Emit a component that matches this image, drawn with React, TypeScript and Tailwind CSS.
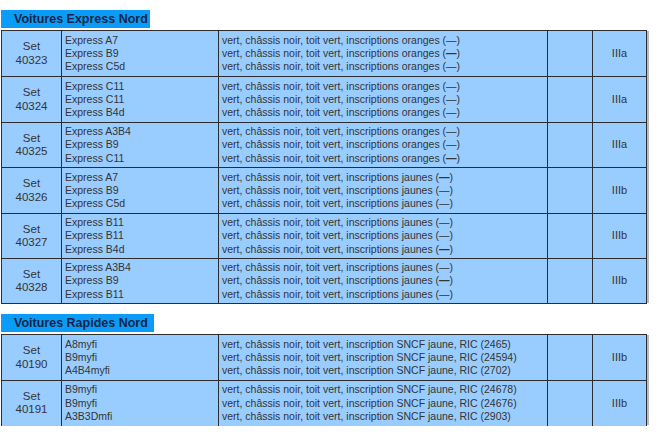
type Row = {
  set: string;
  models: string[];
  livery: { text: string; bold?: boolean }[];
  epoch: string;
  height: string;
};

const express: Row[] = [
  {
    set: "40323",
    models: ["Express A7", "Express B9", "Express C5d"],
    livery: [
      { text: "vert, châssis noir, toit vert, inscriptions oranges (—)" },
      { text: "vert, châssis noir, toit vert, inscriptions oranges (—)", bold: true },
      { text: "vert, châssis noir, toit vert, inscriptions oranges (—)" },
    ],
    epoch: "IIIa",
    height: "h-[46px]",
  },
  {
    set: "40324",
    models: ["Express C11", "Express C11", "Express B4d"],
    livery: [
      { text: "vert, châssis noir, toit vert, inscriptions oranges (—)" },
      { text: "vert, châssis noir, toit vert, inscriptions oranges (—)" },
      { text: "vert, châssis noir, toit vert, inscriptions oranges (—)" },
    ],
    epoch: "IIIa",
    height: "h-[46px]",
  },
  {
    set: "40325",
    models: ["Express A3B4", "Express B9", "Express C11"],
    livery: [
      { text: "vert, châssis noir, toit vert, inscriptions oranges (—)" },
      { text: "vert, châssis noir, toit vert, inscriptions oranges (—)" },
      { text: "vert, châssis noir, toit vert, inscriptions oranges (—)", bold: true },
    ],
    epoch: "IIIa",
    height: "h-[45px]",
  },
  {
    set: "40326",
    models: ["Express A7", "Express B9", "Express C5d"],
    livery: [
      { text: "vert, châssis noir, toit vert, inscriptions jaunes (—)", bold: true },
      { text: "vert, châssis noir, toit vert, inscriptions jaunes (—)" },
      { text: "vert, châssis noir, toit vert, inscriptions jaunes (—)" },
    ],
    epoch: "IIIb",
    height: "h-[46px]",
  },
  {
    set: "40327",
    models: ["Express B11", "Express B11", "Express B4d"],
    livery: [
      { text: "vert, châssis noir, toit vert, inscriptions jaunes (—)" },
      { text: "vert, châssis noir, toit vert, inscriptions jaunes (—)" },
      { text: "vert, châssis noir, toit vert, inscriptions jaunes (—)", bold: true },
    ],
    epoch: "IIIb",
    height: "h-[45px]",
  },
  {
    set: "40328",
    models: ["Express A3B4", "Express B9", "Express B11"],
    livery: [
      { text: "vert, châssis noir, toit vert, inscriptions jaunes (—)" },
      { text: "vert, châssis noir, toit vert, inscriptions jaunes (—)", bold: true },
      { text: "vert, châssis noir, toit vert, inscriptions jaunes (—)" },
    ],
    epoch: "IIIb",
    height: "h-[45px]",
  },
];

const rapides: Row[] = [
  {
    set: "40190",
    models: ["A8myfi", "B9myfi", "A4B4myfi"],
    livery: [
      { text: "vert, châssis noir, toit vert, inscription SNCF jaune, RIC (2465)" },
      { text: "vert, châssis noir, toit vert, inscription SNCF jaune, RIC (24594)" },
      { text: "vert, châssis noir, toit vert, inscription SNCF jaune, RIC (2702)" },
    ],
    epoch: "IIIb",
    height: "h-[46px]",
  },
  {
    set: "40191",
    models: ["B9myfi", "B9myfi", "A3B3Dmfi"],
    livery: [
      { text: "vert, châssis noir, toit vert, inscription SNCF jaune, RIC (24678)" },
      { text: "vert, châssis noir, toit vert, inscription SNCF jaune, RIC (24676)" },
      { text: "vert, châssis noir, toit vert, inscription SNCF jaune, RIC (2903)" },
    ],
    epoch: "IIIb",
    height: "h-[45px]",
  },
];

function Livery({ text, bold }: { text: string; bold?: boolean }) {
  const base = text.replace("(—)", "");
  return (
    <div>
      {base}
      {text.includes("(—)") && (
        <span>
          (<span className={bold ? "font-bold" : ""}>—</span>)
        </span>
      )}
    </div>
  );
}

function SetTable({ rows, cutOff }: { rows: Row[]; cutOff?: boolean }) {
  return (
    <table className="table-fixed w-[645px] border-collapse bg-[#99ccff] text-[#353535] text-[10.5px] leading-[13.3px] shadow-[3px_0_0_-1px_#bbb]">
      <colgroup>
        <col className="w-[60px]" />
        <col className="w-[157px]" />
        <col className="w-[329px]" />
        <col className="w-[45px]" />
        <col className="w-[54px]" />
      </colgroup>
      <tbody>
        {rows.map((r, idx) => {
          // the screenshot is cut before the closing border of the last table
          const cell =
            cutOff && idx === rows.length - 1
              ? "border border-b-0 border-[#2d2d2d]"
              : "border border-[#2d2d2d]";
          return (
            <tr key={r.set} className={r.height}>
              <td className={`${cell} text-center align-middle text-[11.5px] leading-[13.5px]`}>
                Set
                <br />
                {r.set}
              </td>
              <td className={`${cell} pl-[3px] align-middle`}>
                {r.models.map((m, i) => (
                  <div key={i}>{m}</div>
                ))}
              </td>
              <td className={`${cell} pl-[3px] align-middle whitespace-nowrap`}>
                {r.livery.map((l, i) => (
                  <Livery key={i} text={l.text} bold={l.bold} />
                ))}
              </td>
              <td className={cell}></td>
              <td className={`${cell} text-center align-middle text-[11px]`}>{r.epoch}</td>
            </tr>
          );
        })}
      </tbody>
    </table>
  );
}

function SectionTitle({ title, width }: { title: string; width: string }) {
  return (
    <div
      className={`${width} bg-[#0a9cf6] text-[#172447] font-bold text-[12.5px] leading-[18px] pl-[13px]`}
    >
      {title}
    </div>
  );
}

export default function App() {
  return (
    <div
      className="w-[660px] h-[436px] overflow-hidden bg-white pt-[10px] pl-[1px]"
      style={{ fontFamily: '"Liberation Sans", Arial, sans-serif' }}
    >
      <div className="flex flex-col gap-[2px]">
        <SectionTitle title="Voitures Express Nord" width="w-[149px]" />
        <SetTable rows={express} />
      </div>
      <div className="flex flex-col gap-[2px] mt-[10px]">
        <SectionTitle title="Voitures Rapides Nord" width="w-[153px]" />
        <SetTable rows={rapides} cutOff />
      </div>
    </div>
  );
}
